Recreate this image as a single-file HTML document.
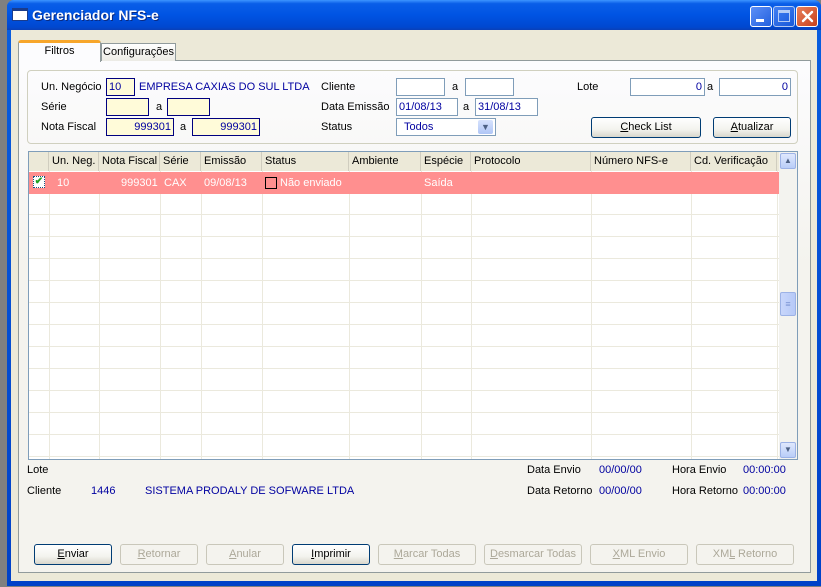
<!DOCTYPE html>
<html><head><meta charset="utf-8"><style>
*{margin:0;padding:0;box-sizing:border-box}
body{width:821px;height:587px;background:#808080;position:relative;overflow:hidden;font-family:"Liberation Sans",sans-serif;font-size:11px;color:#000}
.a{position:absolute;white-space:nowrap}
.win{position:absolute;left:7px;top:0;width:814px;height:586px;background:linear-gradient(#0a5fe0,#0041c8);border-radius:7px 7px 0 0}
.title{position:absolute;left:0;top:0;width:814px;height:30px;background:linear-gradient(#3d95ff 0%,#0a5ee8 12%,#0054e3 50%,#0048d0 90%,#0a3fb8);border-radius:7px 7px 0 0}
.client{position:absolute;left:11px;top:30px;width:806px;height:551px;background:#ece9d8}
.tb{position:absolute;top:6px;width:22px;height:21px;border:1px solid #fff;border-radius:3px;background:linear-gradient(135deg,#5c8ff7,#2361de)}
.in{position:absolute;height:18px;border:1px solid #7f9db9;background:#fff;color:#0000a0;padding:1px 2px;line-height:14px}
.y{background:#fffbd9;border-color:#000080}
.r{text-align:right}
.btn{position:absolute;height:21px;border:1px solid #003c74;border-radius:3px;background:linear-gradient(#fff,#f3f3ee 60%,#d8d6cc);text-align:center;line-height:19px}
.dis{border-color:#c9c7ba;color:#aca899;background:#f4f3ee}
.hd{position:absolute;top:0;height:19px;line-height:19px;padding-left:3px;border-right:1px solid #d0cdbf}
.blue{color:#0000a0}
</style></head><body>
<div class="win">
 <div class="title">
  <div class="a" style="left:5px;top:8px;width:16px;height:13px;background:#fff;border:1px solid #1a3c8c;border-top:3px solid #1a3c8c"></div>
  <div class="a" style="left:25px;top:7px;color:#fff;font-weight:bold;font-size:14px;text-shadow:1px 1px #0a2a80">Gerenciador NFS-e</div>
  <div class="tb" style="left:743px"><div class="a" style="left:5px;top:12px;width:8px;height:3px;background:#fff"></div></div>
  <div class="tb" style="left:766px;opacity:.7"><div class="a" style="left:4px;top:3px;width:12px;height:12px;border:1px solid #fff;border-top:3px solid #fff"></div></div>
  <div class="tb" style="left:789px;background:linear-gradient(135deg,#e8805c,#c8401c)">
   <svg class="a" style="left:4px;top:3px" width="13" height="13"><path d="M2 2L11 11M11 2L2 11" stroke="#fff" stroke-width="2.4" stroke-linecap="round"/></svg>
  </div>
 </div>
</div>
<div class="client" style="left:11px;top:30px"></div>
<div class="a" style="left:18px;top:60px;width:793px;height:513px;border:1px solid #919b9c;background:linear-gradient(#fcfcfe,#f4f3ee 40%)"></div>
<div class="a" style="left:18px;top:40px;width:83px;height:22px;border:1px solid #919b9c;border-bottom:none;border-top:3px solid #f7a62b;border-radius:3px 3px 0 0;background:#fcfcfe;text-align:center;line-height:17px">Filtros</div>
<div class="a" style="left:101px;top:43px;width:75px;height:18px;border:1px solid #919b9c;border-bottom:none;background:linear-gradient(#fff,#ecebe5);text-align:center;line-height:17px">Configurações</div>
<div class="a" style="left:27px;top:70px;width:771px;height:74px;border:1px solid #d0d0bf;border-radius:4px"></div>
<div class="a" style="left:41px;top:81px">Un. Negócio</div>
<div class="a" style="left:41px;top:101px">Série</div>
<div class="a" style="left:41px;top:121px">Nota Fiscal</div>
<div class="in y" style="left:106px;top:78px;width:29px">10</div>
<div class="a blue" style="left:139px;top:81px">EMPRESA CAXIAS DO SUL LTDA</div>
<div class="in y" style="left:106px;top:98px;width:43px"></div>
<div class="a" style="left:156px;top:101px">a</div>
<div class="in y" style="left:167px;top:98px;width:43px"></div>
<div class="in y r" style="left:106px;top:118px;width:68px">999301</div>
<div class="a" style="left:180px;top:121px">a</div>
<div class="in y r" style="left:192px;top:118px;width:68px">999301</div>
<div class="a" style="left:321px;top:81px">Cliente</div>
<div class="a" style="left:321px;top:101px">Data Emissão</div>
<div class="a" style="left:321px;top:121px">Status</div>
<div class="in" style="left:396px;top:78px;width:49px"></div>
<div class="a" style="left:452px;top:81px">a</div>
<div class="in" style="left:465px;top:78px;width:49px"></div>
<div class="in" style="left:396px;top:98px;width:62px">01/08/13</div>
<div class="a" style="left:463px;top:101px">a</div>
<div class="in" style="left:475px;top:98px;width:63px">31/08/13</div>
<div class="in" style="left:396px;top:118px;width:100px;padding-left:7px">Todos<div class="a" style="left:81px;top:1px;width:15px;height:14px;background:linear-gradient(#d6e2fd,#b0c6f6);border-radius:2px;color:#4d6185;font-size:9px;text-align:center;line-height:14px">▼</div></div>
<div class="a" style="left:577px;top:81px">Lote</div>
<div class="in r" style="left:630px;top:78px;width:75px">0</div>
<div class="a" style="left:707px;top:81px">a</div>
<div class="in r" style="left:719px;top:78px;width:72px">0</div>
<div class="btn" style="left:591px;top:117px;width:110px"><u>C</u>heck List</div>
<div class="btn" style="left:713px;top:117px;width:78px"><u>A</u>tualizar</div>
<div class="a" style="left:28px;top:151px;width:770px;height:309px;border:1px solid #7f9db9;background:#fff;overflow:hidden">
 <div class="a" style="left:0;top:0;width:750px;height:19px;background:#ece9d8">
  <div class="hd" style="left:0;width:20px"></div>
  <div class="hd" style="left:20px;width:50px">Un. Neg.</div>
  <div class="hd" style="left:70px;width:61px">Nota Fiscal</div>
  <div class="hd" style="left:131px;width:41px">Série</div>
  <div class="hd" style="left:172px;width:61px">Emissão</div>
  <div class="hd" style="left:233px;width:87px">Status</div>
  <div class="hd" style="left:320px;width:72px">Ambiente</div>
  <div class="hd" style="left:392px;width:50px">Espécie</div>
  <div class="hd" style="left:442px;width:120px">Protocolo</div>
  <div class="hd" style="left:562px;width:100px">Número NFS-e</div>
  <div class="hd" style="left:662px;width:86px">Cd. Verificação</div>
 </div>
 <div class="a" style="left:0;top:19px;width:750px;height:290px;background:repeating-linear-gradient(#fff 0 21px,#ebe9dd 21px 22px);"></div>
 <div class="a" style="left:20px;top:19px;width:1px;height:290px;background:#ebe9dd;box-shadow:50px 0 #ebe9dd,111px 0 #ebe9dd,152px 0 #ebe9dd,213px 0 #ebe9dd,300px 0 #ebe9dd,372px 0 #ebe9dd,422px 0 #ebe9dd,542px 0 #ebe9dd,642px 0 #ebe9dd,728px 0 #ebe9dd"></div>
 <div class="a" style="left:0;top:20px;width:750px;height:22px;background:#ff8f8f;color:#fff;line-height:22px">
  <div class="a" style="left:4px;top:4px;width:12px;height:12px;border:1px dotted #1c5180;background:#fff;color:#21a121;font-size:10px;line-height:10px;text-align:center;font-weight:bold">✔</div>
  <div class="a" style="left:28px">10</div>
  <div class="a" style="left:92px">999301</div>
  <div class="a" style="left:135px">CAX</div>
  <div class="a" style="left:175px">09/08/13</div>
  <div class="a" style="left:236px;top:5px;width:12px;height:12px;border:1px solid #000"></div>
  <div class="a" style="left:251px">Não enviado</div>
  <div class="a" style="left:395px">Saída</div>
 </div>
 <div class="a" style="left:750px;top:0;width:18px;height:307px;background:#f3f3ef">
  <div class="a" style="left:1px;top:1px;width:16px;height:16px;background:linear-gradient(#dfe8fd,#b9cdf8);border:1px solid #9cb2e6;border-radius:2px;color:#4d6185;font-size:8px;text-align:center;line-height:14px">▲</div>
  <div class="a" style="left:1px;top:140px;width:16px;height:24px;background:linear-gradient(90deg,#c8d6fb,#b6c9f7);border:1px solid #9cb2e6;border-radius:2px;color:#7c95d4;font-size:9px;text-align:center;line-height:22px">≡</div>
  <div class="a" style="left:1px;top:290px;width:16px;height:16px;background:linear-gradient(#dfe8fd,#b9cdf8);border:1px solid #9cb2e6;border-radius:2px;color:#4d6185;font-size:8px;text-align:center;line-height:14px">▼</div>
 </div>
</div>
<div class="a" style="left:27px;top:464px">Lote</div>
<div class="a" style="left:27px;top:485px">Cliente</div>
<div class="a blue" style="left:91px;top:485px">1446</div>
<div class="a blue" style="left:145px;top:485px">SISTEMA PRODALY DE SOFWARE LTDA</div>
<div class="a" style="left:527px;top:464px">Data Envio</div>
<div class="a" style="left:527px;top:485px">Data Retorno</div>
<div class="a blue" style="left:599px;top:464px">00/00/00</div>
<div class="a blue" style="left:599px;top:485px">00/00/00</div>
<div class="a" style="left:672px;top:464px">Hora Envio</div>
<div class="a" style="left:672px;top:485px">Hora Retorno</div>
<div class="a blue" style="left:743px;top:464px">00:00:00</div>
<div class="a blue" style="left:743px;top:485px">00:00:00</div>
<div class="btn" style="left:34px;top:544px;width:78px"><u>E</u>nviar</div>
<div class="btn dis" style="left:120px;top:544px;width:78px"><u>R</u>etornar</div>
<div class="btn dis" style="left:206px;top:544px;width:78px"><u>A</u>nular</div>
<div class="btn" style="left:292px;top:544px;width:78px"><u>I</u>mprimir</div>
<div class="btn dis" style="left:378px;top:544px;width:98px"><u>M</u>arcar Todas</div>
<div class="btn dis" style="left:484px;top:544px;width:98px"><u>D</u>esmarcar Todas</div>
<div class="btn dis" style="left:590px;top:544px;width:98px"><u>X</u>ML Envio</div>
<div class="btn dis" style="left:696px;top:544px;width:98px">XM<u>L</u> Retorno</div>
</body></html>
